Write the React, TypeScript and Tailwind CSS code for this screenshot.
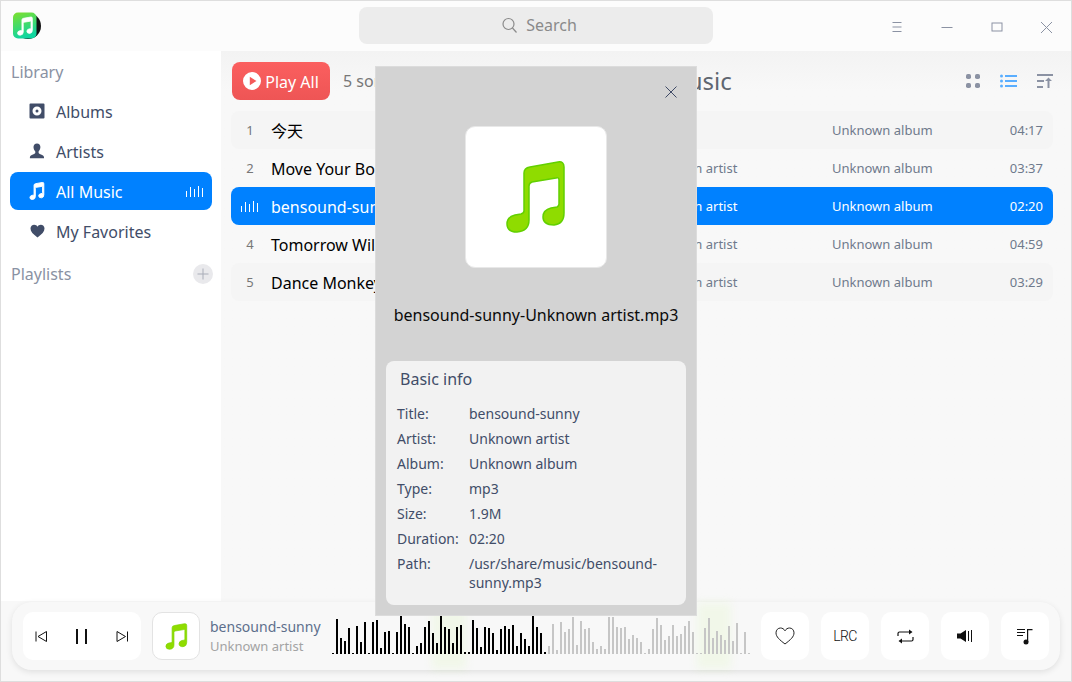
import React from "react";

const NOTE = "M19 13 Q19 8 25 7 L53 2 Q59 1 59 7 V53 Q59 64 49 65 Q38 65 38 57 Q38 50 46 48 L52 47 Q54 46 54 44 V20 Q54 17 51 18 L27 22 Q24 23 24 26 V60 Q24 71 12 72 Q2 72 2 64 Q2 57 10 55 L16 54 Q19 53 19 51 Z";

const black = [1,35,16,13,26,1,28,12,32,1,32,34,6,22,23,1,22,38,30,27,1,8,11,27,33,21,11,38,27,25,11,27,29,2,2,34,26,7,27,26,21,4,25,28,25,29,8,21,15,8,38,27,21,2];
const grey = [8,30,4,32,22,25,37,9,33,25,26,12,5,8,5,37,37,27,26,27,15,19,16,12,1,5,25,36,29,14,18,29,18,20,28,33,22,1,1,26,36,16,23,19,14,28,13,31,1,22,1];

function Bars({ color }: { color: string }) {
  return (
    <svg width="18" height="12" viewBox="0 0 18 12">
      {[6, 10, 8, 11, 9].map((h, i) => (
        <rect key={i} x={i * 4} y={12 - h} width="1" height={h} fill={color} />
      ))}
    </svg>
  );
}

function NavItem({ icon, label, active }: { icon: React.ReactNode; label: string; active?: boolean }) {
  return (
    <div className={"flex h-[38px] items-center rounded-lg pl-[19px] pr-[8px] " + (active ? "bg-[#0081ff] text-white" : "text-[#414d68]")}>
      <span className="flex w-[16px] justify-center">{icon}</span>
      <span className="ml-[11px] flex-1 pt-[2px] text-[16px]">{label}</span>
      {active && <Bars color="#ffffff" />}
    </div>
  );
}

function Row({ n, title, artist, time, alt, active }: { n: number; title: string; artist?: string; time: string; alt?: boolean; active?: boolean }) {
  const sub = active ? "text-white" : "text-[#6f7a8c]";
  return (
    <div className={"flex h-[38px] items-center rounded-lg pr-[10px] " + (active ? "bg-[#0081ff] text-white" : alt ? "bg-[#f5f5f5]" : "")}>
      <span className="flex w-[40px] justify-center pr-[2px]">
        {active ? <Bars color="#ffffff" /> : <span className="pt-[2px] text-[13px] text-[#777777]">{n}</span>}
      </span>
      <span className={"w-[373px] pt-[2px] text-[16px] " + (active ? "text-white" : "text-black")}>{title}</span>
      <span className={"w-[188px] pt-[2px] text-[13px] " + sub}>{artist}</span>
      <span className={"flex-1 pt-[2px] text-[13px] " + sub}>Unknown album</span>
      <span className={"pt-[2px] text-[13px] " + sub}>{time}</span>
    </div>
  );
}

function Tool({ children }: { children: React.ReactNode }) {
  return <div className="flex h-[48px] w-[48px] items-center justify-center rounded-[10px] bg-white">{children}</div>;
}

function Info({ k, v }: { k: string; v: string }) {
  return (
    <div className="mb-[6px] flex text-[14px] leading-[19px] text-[#414d68]">
      <span className="w-[72px] shrink-0">{k}</span>
      <span className="w-[196px] break-words">{v}</span>
    </div>
  );
}

export default function App() {
  return (
    <div className="relative flex h-[682px] w-[1072px] flex-col overflow-hidden border border-[#dedede] bg-[#f8f8f8] font-['Noto_Sans','Noto_Sans_CJK_SC',sans-serif]">
      {/* title bar */}
      <div className="flex h-[50px] shrink-0 items-center bg-[#fcfcfc]">
        <svg className="ml-[12px]" width="29" height="28" viewBox="0 0 29 28">
          <defs>
            <linearGradient id="lg" x1="0" y1="0" x2="0.3" y2="1">
              <stop offset="0" stopColor="#7ee02c" />
              <stop offset="1" stopColor="#10d6a0" />
            </linearGradient>
          </defs>
          <circle cx="15" cy="14" r="13" fill="#111111" />
          <rect x="0" y="0.5" width="23.5" height="26" rx="5" fill="url(#lg)" />
          <g transform="translate(4 4.500) scale(0.26)">
            <path d={NOTE} fill="#ffffff" stroke="#ffffff" strokeWidth="3" />
          </g>
        </svg>
        <div className="mb-[1px] ml-[317px] flex h-[37px] w-[354px] items-center justify-center gap-[8px] rounded-lg bg-[#ececec] pl-[6px] text-[16px] text-[#8a8a8a]">
          <svg width="17" height="17" viewBox="0 0 17 17" fill="none" stroke="#8a8a8a" strokeWidth="1.2">
            <circle cx="7.5" cy="7" r="5.5" />
            <path d="M11.5 11l4 4.5" />
          </svg>
          <span className="pb-[2px]">Search</span>
        </div>
        <div className="ml-auto flex items-center pr-[18px] pt-[2px]">
          <svg width="12" height="12" viewBox="0 0 12 12" stroke="#8b92a3" fill="none"><path d="M1.5 1.5h9M1.5 6h9M1.5 10.5h9" /></svg>
          <svg className="ml-[38px]" width="12" height="12" viewBox="0 0 12 12" stroke="#8b92a3" fill="none"><path d="M0.5 6.5h11" /></svg>
          <svg className="ml-[38px]" width="12" height="12" viewBox="0 0 12 12" stroke="#8b92a3" fill="none"><rect x="1" y="2" width="10" height="8" /></svg>
          <svg className="ml-[37px]" width="13" height="13" viewBox="0 0 13 13" stroke="#8b92a3" fill="none"><path d="M1 1l11 11M12 1L1 12" /></svg>
        </div>
      </div>

      <div className="flex min-h-0 flex-1">
        {/* sidebar */}
        <aside className="flex w-[220px] shrink-0 flex-col bg-white px-[9px]">
          <div className="ml-px flex h-[41px] items-center pt-[1px] text-[16px] text-[#8a92a3]">Library</div>
          <div className="flex flex-col gap-[2px]">
            <NavItem label="Albums" icon={
              <svg width="16" height="16" viewBox="0 0 16 16"><path fillRule="evenodd" d="M1.5 0.5h13a1 1 0 0 1 1 1v13a1 1 0 0 1-1 1h-13a1 1 0 0 1-1-1v-13a1 1 0 0 1 1-1zM8 3.5a4.5 4.5 0 1 0 0 9 4.5 4.5 0 0 0 0-9zM8 6.5a1.5 1.5 0 1 1 0 3 1.5 1.5 0 0 1 0-3z" fill="#414d68" /></svg>
            } />
            <NavItem label="Artists" icon={
              <svg width="16" height="16" viewBox="0 0 16 16"><path d="M8 0.5c2.2 0 3.4 1.6 3.4 3.6 0 1.9-.8 3.4-1.8 4.3v1.4c0 .8 1.2 1.2 3 2 1.4.6 2.4 1.3 2.4 2.5v.9H.9v-.9c0-1.2 1-1.9 2.4-2.5 1.8-.8 3-1.2 3-2V8.400c-1-.9-1.8-2.400-1.800-4.300C4.500 2.100 5.800.5 8 .5z" fill="#414d68" /></svg>
            } />
            <NavItem active label="All Music" icon={
              <svg width="17" height="18" viewBox="0 0 62 74"><path d={NOTE} fill="#ffffff" stroke="#ffffff" strokeWidth="4" /></svg>
            } />
            <NavItem label="My Favorites" icon={
              <svg width="15" height="14" viewBox="0 0 15 14"><path d="M7.500 13.500C3 10.200.5 7.800.5 4.600.5 2.300 2.200.8 4.200.8c1.400 0 2.600.7 3.300 1.900C8.200 1.500 9.400.8 10.800.8c2 0 3.700 1.500 3.700 3.800 0 3.200-2.500 5.600-7 8.900z" fill="#414d68" /></svg>
            } />
          </div>
          <div className="ml-px mt-[4px] flex h-[40px] items-center justify-between text-[16px] text-[#8a92a3]">
            Playlists
            <span className="mr-[-1px] flex h-[20px] w-[20px] items-center justify-center rounded-full bg-[#e9e9ec]">
              <svg width="12" height="12" viewBox="0 0 12 12" stroke="#a9adb8" fill="none"><path d="M6 .5v11M.5 6h11" /></svg>
            </span>
          </div>
        </aside>

        {/* content */}
        <main className="flex min-w-0 flex-1 flex-col bg-gradient-to-b from-[#f3f3f3] to-[#f8f8f8] to-[40px] pl-[10px] pr-[18px]">
          <div className="flex h-[60px] shrink-0 items-center">
            <div className="ml-px flex h-[38px] w-[98px] items-center justify-center gap-[4px] rounded-lg bg-gradient-to-b from-[#fb5f5f] to-[#ee5555] text-[16px] text-white">
              <svg width="18" height="18" viewBox="0 0 18 18"><path fillRule="evenodd" d="M9 0a9 9 0 1 1 0 18A9 9 0 0 1 9 0zM6.800 4.800v8.400L13.500 9z" fill="#ffffff" /></svg>
              <span className="pt-[2px]">Play All</span>
            </div>
            <span className="ml-[13px] w-[200px] text-[16px] text-[#777777]">5 songs</span>
            <span className="ml-[89px] text-[24px] text-[#5f6670]">All Music</span>
            <div className="ml-auto flex items-center">
              <svg width="14" height="14" viewBox="0 0 14 14" fill="#8b92a3"><rect x="0" y="0" width="5" height="5" rx="1.800" /><rect x="9" y="0" width="5" height="5" rx="1.800" /><rect x="0" y="9" width="5" height="5" rx="1.800" /><rect x="9" y="9" width="5" height="5" rx="1.800" /></svg>
              <svg className="ml-[20px]" width="17" height="14" viewBox="0 0 17 14" fill="#5aaeff"><circle cx="1.500" cy="2" r="1.500" /><circle cx="1.500" cy="7" r="1.500" /><circle cx="1.500" cy="12" r="1.500" /><rect x="5" y="1" width="12" height="2" /><rect x="5" y="6" width="12" height="2" /><rect x="5" y="11" width="12" height="2" /></svg>
              <svg className="ml-[20px]" width="16" height="14" viewBox="0 0 16 14" fill="#8b92a3"><rect x="0" y="0" width="16" height="2" /><rect x="0" y="6" width="7" height="2" /><rect x="0" y="12" width="6" height="2" /><path d="M11.500 3.500l3.500 3.500h-2.500v7h-2V7H8z" /></svg>
            </div>
          </div>
          <Row alt n={1} title="今天" time="04:17" />
          <Row n={2} title="Move Your Body" artist="Unknown artist" time="03:37" />
          <Row active n={3} title="bensound-sunny" artist="Unknown artist" time="02:20" />
          <Row n={4} title="Tomorrow Will Be" artist="Unknown artist" time="04:59" />
          <Row alt n={5} title="Dance Monkey" artist="Unknown artist" time="03:29" />
        </main>
      </div>

      {/* footer */}
      <div className="relative h-[80px] shrink-0 bg-[#f8f8f8] px-[11px] pt-[1px]">
        <div className="absolute left-[431px] top-[2px] h-[66px] w-[34px] bg-[#eef7e3] blur-[4px]" />
        <div className="absolute left-[696px] top-[2px] h-[66px] w-[34px] bg-[#eef7e3] blur-[4px]" />
        <div className="relative flex h-[68px] items-center rounded-[20px] bg-[#f8f8f8]/30 pl-[11px] pr-[11px] shadow-[0_2px_6px_rgba(0,0,0,0.10)]">
          <div className="flex h-[48px] w-[118px] items-center justify-between rounded-[10px] bg-white px-[12px]">
            <svg width="13" height="13" viewBox="0 0 13 13" fill="none" stroke="#111111"><path d="M1 1.500v10M11.500 1.500v10L3 6.500z" /></svg>
            <svg width="14" height="15" viewBox="0 0 14 15" fill="#111111"><rect x="1" y="0" width="2" height="15" /><rect x="10" y="0" width="2" height="15" /></svg>
            <svg width="13" height="13" viewBox="0 0 13 13" fill="none" stroke="#111111"><path d="M11.500 1.500v10M1 1.500v10l8.500-5z" /></svg>
          </div>
          <div className="ml-[11px] flex h-[48px] w-[48px] items-center justify-center rounded-[10px] border border-[#e3e3e3] bg-white">
            <svg width="23" height="27" viewBox="0 0 62 74"><path d={NOTE} fill="#8fdc00" stroke="#7ed400" strokeWidth="2" /></svg>
          </div>
          <div className="ml-[10px] w-[124px] shrink-0">
            <div className="text-[14px] leading-[20px] text-[#5d6f8c]">bensound-sunny</div>
            <div className="text-[13px] leading-[19px] text-[#a3a3a3]">Unknown artist</div>
          </div>
          <svg className="ml-[-2px] mt-[-2px] shrink-0" width="428" height="38" viewBox="0 0 428 38">
            {black.map((h, i) => <rect key={"b" + i} x={i * 4} y={38 - h} width="2" height={h} fill="#000000" />)}
            {grey.map((h, i) => <rect key={"g" + i} x={(i + black.length) * 4} y={38 - h} width="2" height={h} fill="#c6c6c6" />)}
          </svg>
          <div className="ml-auto flex gap-[12px]">
            <Tool>
              <svg width="20" height="18" viewBox="0 0 20 18" fill="none" stroke="#222222"><path d="M10 17C4.500 12.800 1 9.800 1 5.800 1 3 3 1 5.500 1 7.300 1 9 2 10 3.800 11 2 12.700 1 14.500 1 17 1 19 3 19 5.800 19 9.800 15.500 12.800 10 17z" /></svg>
            </Tool>
            <Tool><span className="font-['Roboto',sans-serif] text-[14px] font-light tracking-[-0.6px] text-[#111111]">LRC</span></Tool>
            <Tool>
              <svg width="17" height="15" viewBox="0 0 17 15" fill="#111111"><path d="M1 7V4.500C1 3.500 1.700 3 2.500 3H14M16 8v2.500c0 1-.7 1.500-1.500 1.500H3" fill="none" stroke="#111111" strokeWidth="1.200" /><path d="M12 0.500l3.500 2.500-3.500 2.500zM5 9.500L1.500 12 5 14.500z" /></svg>
            </Tool>
            <Tool>
              <svg width="16" height="12" viewBox="0 0 16 12" fill="#111111"><path d="M0 3.500h3.500L9 0v12L3.500 8.500H0z" /><rect x="11" y="1" width="1" height="10" /><rect x="14" y="0" width="1" height="12" /></svg>
            </Tool>
            <Tool>
              <svg width="16" height="17" viewBox="0 0 16 17" fill="#111111"><rect x="0" y="1" width="8" height="1" /><rect x="0" y="4" width="8" height="1" /><rect x="0" y="7" width="6" height="1" /><path d="M10 1h5.500v1.200H11.200V14H10z" /><circle cx="9" cy="14" r="2.500" /></svg>
            </Tool>
          </div>
        </div>
      </div>

      {/* modal */}
      <div className="absolute left-[374px] top-[65px] flex h-[550px] w-[322px] flex-col items-center border border-[#dcdcdc] bg-[#d3d3d3]">
        <svg className="absolute left-[288px] top-[18px]" width="14" height="14" viewBox="0 0 14 14" stroke="#3f4a66" fill="none"><path d="M1.500 1.500l11 11M12.500 1.500l-11 11" /></svg>
        <div className="mt-[59px] flex h-[142px] w-[142px] items-center justify-center rounded-[10px] border border-[#e8e8e8] bg-white">
          <svg width="62" height="74" viewBox="0 0 62 74"><path d={NOTE} fill="#8fdc00" stroke="#62d000" strokeWidth="1.500" /></svg>
        </div>
        <div className="mt-[35px] text-[16px] leading-[24px] text-[#0a0a0a]">bensound-sunny-Unknown artist.mp3</div>
        <div className="mt-[34px] h-[244px] w-[300px] rounded-lg bg-[#f2f2f2] pl-[11px] pt-[6px]">
          <div className="mb-[13px] ml-[3px] text-[16px] leading-[24px] text-[#414d68]">Basic info</div>
          <Info k="Title:" v="bensound-sunny" />
          <Info k="Artist:" v="Unknown artist" />
          <Info k="Album:" v="Unknown album" />
          <Info k="Type:" v="mp3" />
          <Info k="Size:" v="1.9M" />
          <Info k="Duration:" v="02:20" />
          <Info k="Path:" v="/usr/share/music/bensound-sunny.mp3" />
        </div>
      </div>
    </div>
  );
}
